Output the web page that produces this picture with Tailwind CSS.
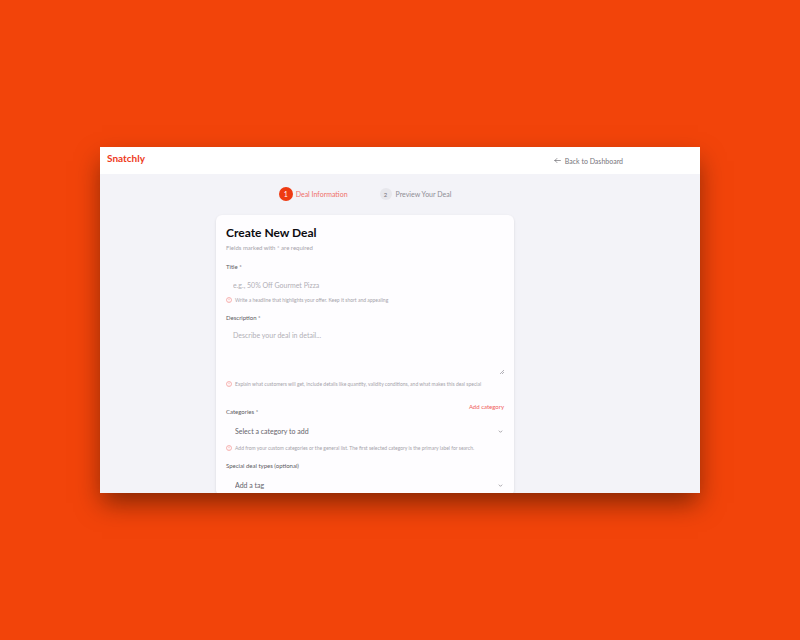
<!DOCTYPE html>
<html lang="en">
<head>
    <meta charset="UTF-8">
    <meta name="viewport" content="width=device-width, initial-scale=1.0">
    <title>Snatchly - Create New Deal</title>
    <script src="https://cdn.jsdelivr.net/npm/@tailwindcss/browser@4"></script>
</head>
<body class="flex min-h-screen items-center justify-center bg-[#f2440a] font-['Lato',sans-serif]">
    <!-- App window -->
    <div class="flex aspect-[600/346] w-3/4 flex-col overflow-hidden bg-[#f3f3f8] shadow-[0_12px_24px_-2px_rgba(60,20,0,0.6)]">
        <!-- Navbar -->
        <header class="flex h-[27px] shrink-0 items-center justify-between bg-white pr-[77px] pl-[7px]">
            <a href="#" class="pb-[5px] text-[10px] leading-3 font-bold text-[#ee3a1c]">Snatchly</a>
            <a href="#" class="flex items-center gap-1 text-[7px] leading-3 text-[#77757c]">
                <svg class="h-[7px] w-[7px] text-[#55535a]" fill="none" stroke="currentColor" stroke-width="2" stroke-linecap="round" stroke-linejoin="round" viewBox="0 0 24 24">
                    <path d="M22 12H3M10 5l-7 7 7 7" />
                </svg>
                Back to Dashboard
            </a>
        </header>

        <main class="flex flex-col items-center pr-[70px]">
            <!-- Steps -->
            <ol class="mt-3 flex h-4 items-center gap-8 text-[7px]">
                <li class="flex items-center gap-[3px] text-[#f0706a]">
                    <span class="flex h-[14px] w-[14px] items-center justify-center rounded-full bg-[#ee3a12] text-white">1</span>
                    Deal Information
                </li>
                <li class="flex items-center gap-1 text-[#8e8d95]">
                    <span class="flex h-3 w-3 items-center justify-center rounded-full bg-[#e7e7ec] text-[6px] text-[#77757c]">2</span>
                    Preview Your Deal
                </li>
            </ol>

            <!-- Deal form -->
            <form class="mt-[13px] w-full max-w-[298px] rounded-md bg-[#fefdff] px-[10px] pt-[10px] shadow-sm">
                <h1 class="text-[12px] leading-4 font-bold text-[#0d0c10]">Create New Deal</h1>
                <p class="mt-[3px] text-[6px] leading-2 text-[#a5a3aa]">Fields marked with * are required</p>

                <div class="mt-[11px]">
                    <label for="title" class="block text-[6px] leading-2 text-[#5c5a61]">Title *</label>
                    <input id="title" type="text" placeholder="e.g., 50% Off Gourmet Pizza" class="mt-1 block h-5 w-full px-[7px] text-[7px] outline-none placeholder:text-[#b1afb6]">
                    <p class="mt-[1px] flex items-center gap-[3px] text-[5px] leading-2 whitespace-nowrap text-[#a5a3aa]">
                        <svg class="h-[6px] w-[6px] shrink-0 text-[#f0706a]" fill="none" stroke="currentColor" stroke-width="2" viewBox="0 0 24 24">
                            <circle cx="12" cy="12" r="10" />
                            <path d="M12 6v7M12 16v2" />
                        </svg>
                        Write a headline that highlights your offer. Keep it short and appealing
                    </p>
                </div>

                <div class="mt-[10px]">
                    <label for="description" class="block text-[6px] leading-2 text-[#5c5a61]">Description *</label>
                    <textarea id="description" placeholder="Describe your deal in detail..." class="mt-1 block h-12 w-full resize-none px-[7px] py-[3px] text-[7px] leading-3 outline-none placeholder:text-[#b1afb6]"></textarea>
                    <svg class="-mt-1 ml-auto h-1 w-1 text-[#8e8d95]" fill="none" stroke="currentColor" stroke-width="1" viewBox="0 0 6 6">
                        <path d="M0 6L6 0M3 6L6 3" />
                    </svg>
                    <p class="mt-[6px] flex items-center gap-[3px] text-[5px] leading-2 whitespace-nowrap text-[#a5a3aa]">
                        <svg class="h-[6px] w-[6px] shrink-0 text-[#f0706a]" fill="none" stroke="currentColor" stroke-width="2" viewBox="0 0 24 24">
                            <circle cx="12" cy="12" r="10" />
                            <path d="M12 6v7M12 16v2" />
                        </svg>
                        Explain what customers will get, include details like quantity, validity conditions, and what makes this deal special
                    </p>
                </div>

                <div class="mt-[15px]">
                    <div class="flex items-start justify-between">
                        <label for="category" class="pt-[5px] text-[6px] leading-2 text-[#5c5a61]">Categories *</label>
                        <button type="button" class="text-[6px] leading-2 text-[#f0605a]">Add category</button>
                    </div>
                    <div class="mt-1 grid items-center">
                        <select id="category" class="col-start-1 row-start-1 h-[22px] w-full appearance-none px-[9px] text-[7px] text-[#66646b] outline-none">
                            <option>Select a category to add</option>
                        </select>
                        <svg class="pointer-events-none col-start-1 row-start-1 mr-[1px] h-[5px] w-[5px] justify-self-end text-[#77757c]" fill="none" stroke="currentColor" stroke-width="3" viewBox="0 0 24 24">
                            <path d="M4 8l8 8 8-8" />
                        </svg>
                    </div>
                    <p class="mt-[2px] flex items-center gap-[3px] text-[5px] leading-2 whitespace-nowrap text-[#a5a3aa]">
                        <svg class="h-[6px] w-[6px] shrink-0 text-[#f0706a]" fill="none" stroke="currentColor" stroke-width="2" viewBox="0 0 24 24">
                            <circle cx="12" cy="12" r="10" />
                            <path d="M12 6v7M12 16v2" />
                        </svg>
                        Add from your custom categories or the general list. The first selected category is the primary label for search.
                    </p>
                </div>

                <div class="mt-[10px]">
                    <label for="tag" class="block text-[6px] leading-2 text-[#5c5a61]">Special deal types (optional)</label>
                    <div class="mt-1 grid items-center">
                        <select id="tag" class="col-start-1 row-start-1 h-[22px] w-full appearance-none px-[9px] text-[7px] text-[#66646b] outline-none">
                            <option>Add a tag</option>
                        </select>
                        <svg class="pointer-events-none col-start-1 row-start-1 mr-[1px] h-[5px] w-[5px] justify-self-end text-[#77757c]" fill="none" stroke="currentColor" stroke-width="3" viewBox="0 0 24 24">
                            <path d="M4 8l8 8 8-8" />
                        </svg>
                    </div>
                </div>
            </form>
        </main>
    </div>
</body>
</html>
